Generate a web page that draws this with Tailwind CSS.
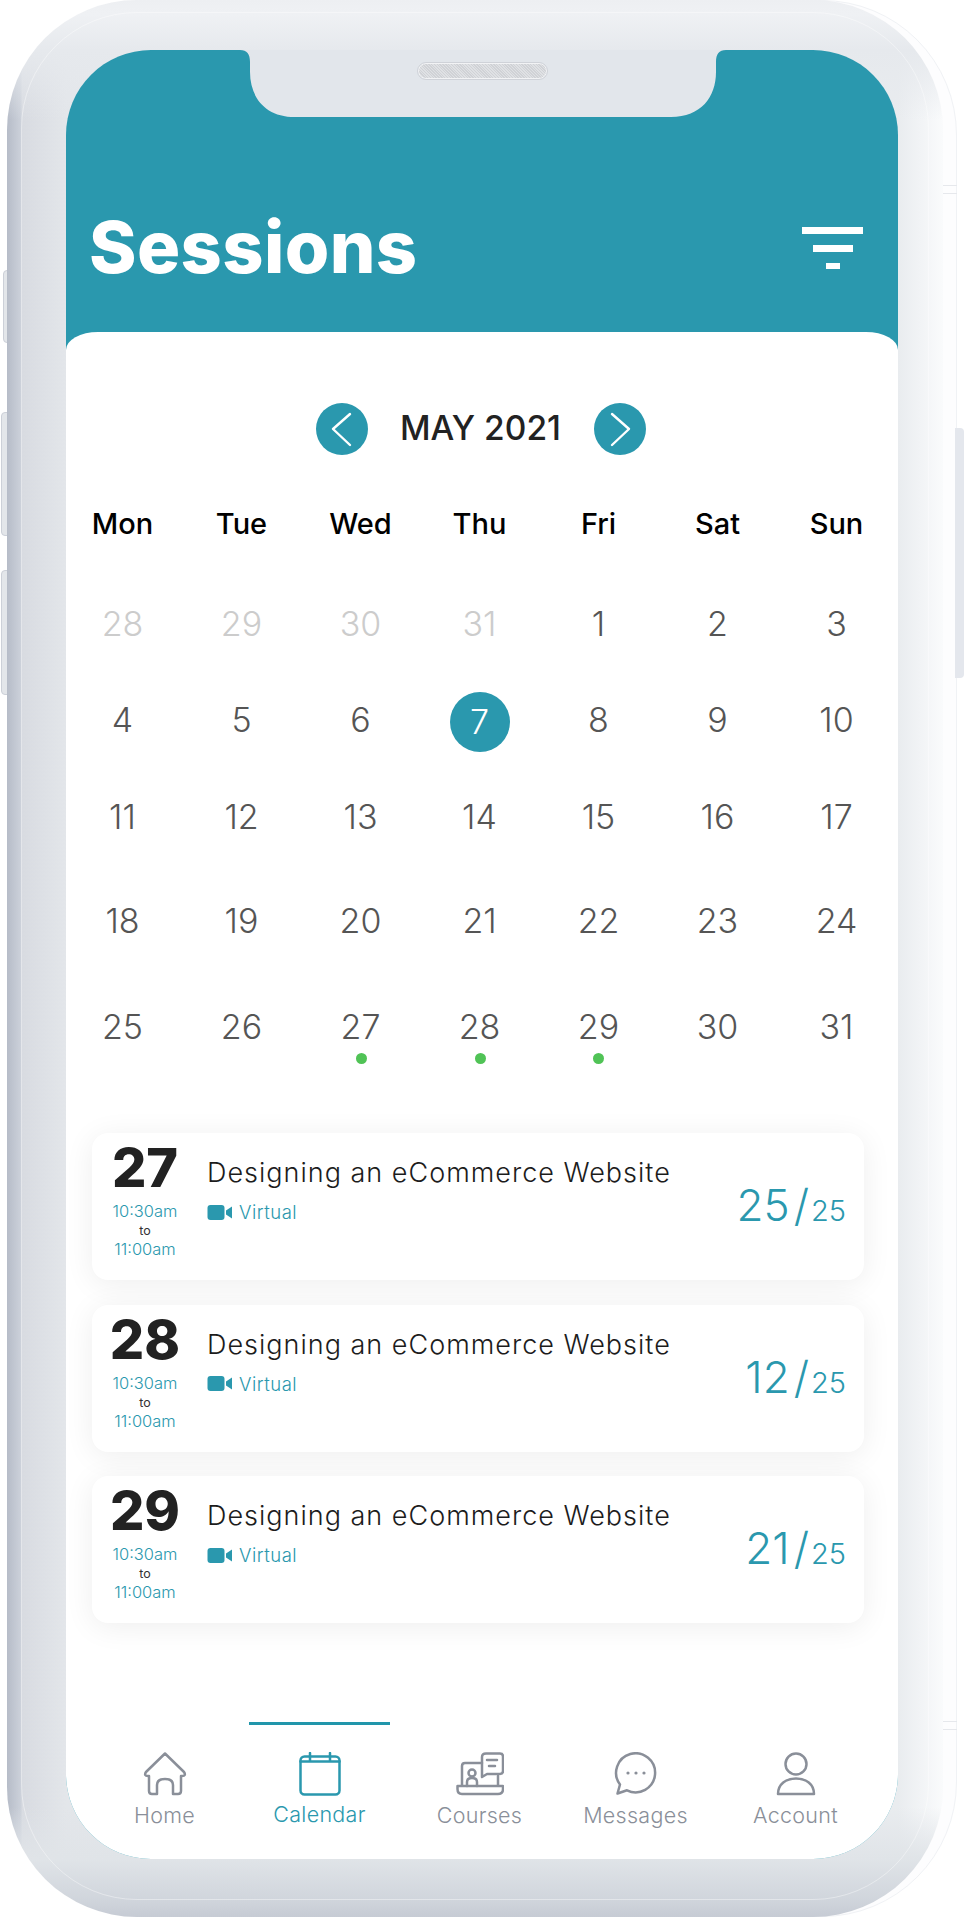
<!DOCTYPE html>
<html lang="en">
<head>
<meta charset="utf-8">
<title>Sessions</title>
<script src="https://cdn.jsdelivr.net/npm/@tailwindcss/browser@4"></script>
</head>
<body class="bg-white">
<div class="relative w-[965px] h-[1919px] overflow-hidden bg-white font-['Inter','Liberation_Sans',sans-serif]">
  <!-- side buttons -->
  <div class="absolute left-[3px] top-[270px] w-[8px] h-[73px] rounded-l-[4px] bg-[#e3e6ea] border border-[#ccd0d8]"></div>
  <div class="absolute left-[1px] top-[412px] w-[10px] h-[124px] rounded-l-[4px] bg-[#e3e6ea] border border-[#ccd0d8]"></div>
  <div class="absolute left-[1px] top-[570px] w-[10px] h-[125px] rounded-l-[4px] bg-[#e3e6ea] border border-[#ccd0d8]"></div>
  <!-- outer rim -->
  <div class="absolute left-[300px] top-0 w-[657px] h-[1917px] rounded-[135px] bg-[#fdfdfe] border border-[#f0f2f5]"></div>
  <div class="absolute left-[955px] top-[428px] w-[9px] h-[250px] rounded-r-[4px] bg-[#e4e7ed]"></div>
  <div class="absolute left-[943px] top-[185px] w-[14px] h-[9px] border-y border-[#e6e8ec]"></div>
  <div class="absolute left-[943px] top-[1721px] w-[14px] h-[9px] border-y border-[#e6e8ec]"></div>

  <!-- phone body -->
  <div class="absolute left-[7px] top-0 w-[936px] h-[1917px] rounded-[130px] pt-[50px] pl-[59px] bg-[linear-gradient(to_top,#c6cbd4_0px,#d0d5dc_17px,#e0e4e8_58px,transparent_110px),linear-gradient(to_bottom,#edeff2_0px,#eff1f4_14px,#e6e9ed_50px,transparent_120px),linear-gradient(to_right,#b6bcc8_0px,#ccd1da_14px,#d8dbe1_15px,#e3e6ea_59px,#e9ecef_50%,#e9ecef_891px,#fafbfc_100%)]">
    <div class="absolute inset-x-[14px] top-[12px] bottom-[17px] rounded-[116px] border border-white/40"></div>

    <!-- screen -->
    <div class="relative flex flex-col w-[832px] h-[1809px] rounded-[85px] overflow-hidden bg-[#2a98ae]">
      <!-- notch -->
      <svg class="absolute left-[174px] top-0" width="486" height="67" viewBox="0 0 486 67">
        <path d="M0 0C7 0 10 4 10 12V22C10 47 25 67 55 67H431C461 67 476 47 476 22V12C476 4 479 0 486 0Z" fill="#e2e6eb"/>
      </svg>
      <div class="absolute left-[352px] top-[13px] w-[129px] h-[16px] rounded-full bg-[repeating-linear-gradient(45deg,#d0d2d6_0px,#d0d2d6_1px,#dfe1e4_1px,#dfe1e4_2px)] border border-[#f2f3f5] outline outline-[#cfd2d8]"></div>

      <!-- header -->
      <div class="flex items-center justify-between h-[282px] shrink-0 pt-[111px] pl-[23px] pr-[35px]">
        <h1 class="text-[72px] leading-none font-extrabold text-white tracking-[0.4px] mt-[1px]">Sessions</h1>
        <div class="flex flex-col items-center gap-[11px] mt-[2px]">
          <div class="w-[61px] h-[7px] bg-white"></div>
          <div class="w-[40px] h-[7px] bg-white"></div>
          <div class="w-[14px] h-[6px] bg-white"></div>
        </div>
      </div>

      <!-- panel -->
      <div class="flex flex-col flex-1 bg-white rounded-tl-[32px_18px] rounded-tr-[32px_18px]">
        <div class="flex items-center justify-center h-[52px] mt-[71px] ml-[-3px]">
          <button class="w-[52px] h-[52px] rounded-full bg-[#2a98ae] flex items-center justify-center">
            <svg width="52" height="52" viewBox="0 0 52 52" fill="none"><path d="M34 11L17 26L34 42" stroke="#fff" stroke-width="2.4" stroke-linecap="round" stroke-linejoin="round"/></svg>
          </button>
          <div class="w-[226px] text-center text-[33.5px] leading-none font-medium text-[#222]">MAY 2021</div>
          <button class="w-[52px] h-[52px] rounded-full bg-[#2a98ae] flex items-center justify-center">
            <svg width="52" height="52" viewBox="0 0 52 52" fill="none"><path d="M18 11L35 26L18 42" stroke="#fff" stroke-width="2.4" stroke-linecap="round" stroke-linejoin="round"/></svg>
          </button>
        </div>

        <div class="grid grid-cols-7 w-[833px] ml-[-3px] mt-[47px] h-[40px] items-center text-center text-[29px] font-medium text-black">
          <div>Mon</div><div>Tue</div><div>Wed</div><div>Thu</div><div>Fri</div><div>Sat</div><div>Sun</div>
        </div>

        <div class="grid grid-cols-7 grid-rows-[96px_96px_98px_110px_102px] w-[833px] ml-[-3px] mt-[33px] items-center justify-items-center text-[34px] font-light text-[#555]">
          <div class="text-[#ccc]">28</div><div class="text-[#ccc]">29</div><div class="text-[#ccc]">30</div><div class="text-[#ccc]">31</div><div>1</div><div>2</div><div>3</div>
          <div>4</div><div>5</div><div>6</div>
          <div class="flex items-center justify-center w-[60px] h-[60px] mt-[5px] rounded-full bg-[#2a98ae] text-white">7</div>
          <div>8</div><div>9</div><div>10</div>
          <div>11</div><div>12</div><div>13</div><div>14</div><div>15</div><div>16</div><div>17</div>
          <div>18</div><div>19</div><div>20</div><div>21</div><div>22</div><div>23</div><div>24</div>
          <div>25</div><div>26</div>
          <div class="relative">27<span class="absolute left-1/2 top-[52px] -ml-[5px] w-[11px] h-[11px] rounded-full bg-[#50c356]"></span></div>
          <div class="relative">28<span class="absolute left-1/2 top-[52px] -ml-[5px] w-[11px] h-[11px] rounded-full bg-[#50c356]"></span></div>
          <div class="relative">29<span class="absolute left-1/2 top-[52px] -ml-[5px] w-[11px] h-[11px] rounded-full bg-[#50c356]"></span></div>
          <div>30</div><div>31</div>
        </div>

        <!-- cards -->
        <div class="flex flex-col gap-[24.5px] mt-[56px] ml-[26px] w-[772px]">
          <div class="relative flex h-[147px] rounded-[16px] bg-white shadow-[0_4px_30px_rgba(0,0,0,0.07)]">
            <div class="w-[115px] shrink-0 flex flex-col items-center pr-[9px] pt-[4px]">
              <div class="text-[54px] leading-[62px] font-extrabold text-[#222]">27</div>
              <div class="text-[16.5px] leading-[19px] mt-[3px] font-light text-[#2a98ae]">10:30am</div>
              <div class="text-[12.5px] leading-[19px] text-[#333]">to</div>
              <div class="text-[16.5px] leading-[19px] font-light text-[#2a98ae]">11:00am</div>
            </div>
            <div class="pt-[24px]">
              <div class="text-[27px] leading-[32px] font-light text-[#1c1c1c] tracking-[1px]">Designing an eCommerce Website</div>
              <div class="flex items-center gap-[7px] mt-[11px] text-[18.5px] leading-[24px] font-light text-[#2a98ae]">
                <svg width="25" height="15" viewBox="0 0 25 15"><rect x="0.5" width="17" height="15" rx="3" fill="#2a98ae"/><path d="M19 5.5L25 1.5V13.5L19 9.5Z" fill="#2a98ae"/></svg>
                <span class="tracking-[0.5px]">Virtual</span>
              </div>
            </div>
            <div class="absolute right-[18px] top-[46px] flex items-baseline font-light text-[#2a98ae] text-[44px] leading-[52px]"><span>25</span><span class="ml-[4px] mr-[2px]">/</span><span class="text-[29px]">25</span></div>
          </div>

          <div class="relative flex h-[147px] rounded-[16px] bg-white shadow-[0_4px_30px_rgba(0,0,0,0.07)]">
            <div class="w-[115px] shrink-0 flex flex-col items-center pr-[9px] pt-[4px]">
              <div class="text-[54px] leading-[62px] font-extrabold text-[#222]">28</div>
              <div class="text-[16.5px] leading-[19px] mt-[3px] font-light text-[#2a98ae]">10:30am</div>
              <div class="text-[12.5px] leading-[19px] text-[#333]">to</div>
              <div class="text-[16.5px] leading-[19px] font-light text-[#2a98ae]">11:00am</div>
            </div>
            <div class="pt-[24px]">
              <div class="text-[27px] leading-[32px] font-light text-[#1c1c1c] tracking-[1px]">Designing an eCommerce Website</div>
              <div class="flex items-center gap-[7px] mt-[11px] text-[18.5px] leading-[24px] font-light text-[#2a98ae]">
                <svg width="25" height="15" viewBox="0 0 25 15"><rect x="0.5" width="17" height="15" rx="3" fill="#2a98ae"/><path d="M19 5.5L25 1.5V13.5L19 9.5Z" fill="#2a98ae"/></svg>
                <span class="tracking-[0.5px]">Virtual</span>
              </div>
            </div>
            <div class="absolute right-[18px] top-[46px] flex items-baseline font-light text-[#2a98ae] text-[44px] leading-[52px]"><span>12</span><span class="ml-[4px] mr-[2px]">/</span><span class="text-[29px]">25</span></div>
          </div>

          <div class="relative flex h-[147px] rounded-[16px] bg-white shadow-[0_4px_30px_rgba(0,0,0,0.07)]">
            <div class="w-[115px] shrink-0 flex flex-col items-center pr-[9px] pt-[4px]">
              <div class="text-[54px] leading-[62px] font-extrabold text-[#222]">29</div>
              <div class="text-[16.5px] leading-[19px] mt-[3px] font-light text-[#2a98ae]">10:30am</div>
              <div class="text-[12.5px] leading-[19px] text-[#333]">to</div>
              <div class="text-[16.5px] leading-[19px] font-light text-[#2a98ae]">11:00am</div>
            </div>
            <div class="pt-[24px]">
              <div class="text-[27px] leading-[32px] font-light text-[#1c1c1c] tracking-[1px]">Designing an eCommerce Website</div>
              <div class="flex items-center gap-[7px] mt-[11px] text-[18.5px] leading-[24px] font-light text-[#2a98ae]">
                <svg width="25" height="15" viewBox="0 0 25 15"><rect x="0.5" width="17" height="15" rx="3" fill="#2a98ae"/><path d="M19 5.5L25 1.5V13.5L19 9.5Z" fill="#2a98ae"/></svg>
                <span class="tracking-[0.5px]">Virtual</span>
              </div>
            </div>
            <div class="absolute right-[18px] top-[46px] flex items-baseline font-light text-[#2a98ae] text-[44px] leading-[52px]"><span>21</span><span class="ml-[4px] mr-[2px]">/</span><span class="text-[29px]">25</span></div>
          </div>
        </div>

        <!-- nav -->
        <nav class="flex mt-auto h-[137px] text-[21.5px] tracking-[0.3px] font-light text-[#8a8f99]">
          <a class="flex flex-col items-center w-[141px] ml-[28px] border-t-[3px] border-transparent pt-[27px]">
            <svg width="44" height="44" viewBox="0 0 44 44" fill="none" stroke="#8a8f99" stroke-width="2.5" stroke-linejoin="round"><path d="M22 1.5L41 20Q43.5 24 39 24H38V39Q38 42 35 42H30V33Q30 27 22 27Q14 27 14 33V42H9Q6 42 6 39V24H5Q.5 24 3 20Z"/></svg>
            <span class="mt-[5px] leading-[28px]">Home</span>
          </a>
          <a class="flex flex-col items-center w-[141px] ml-[14px] border-t-[3px] border-[#2196ab] pt-[27px] text-[#2a98ae]">
            <svg width="44" height="44" viewBox="0 0 44 44" fill="none" stroke="#2a98ae" stroke-width="2.5" stroke-linecap="round"><rect x="2.5" y="4.5" width="39" height="38" rx="4"/><path d="M2.5 9.5H41.5M12 1V9M32 1V9"/></svg>
            <span class="mt-[4px] leading-[28px]">Calendar</span>
          </a>
          <a class="flex flex-col items-center w-[141px] ml-[19px] border-t-[3px] border-transparent pt-[27px]">
            <svg width="48" height="44" viewBox="0 0 48 44" fill="none" stroke="#8a8f99" stroke-width="2.5" stroke-linejoin="round" stroke-linecap="round"><path d="M26 11H9Q6 11 6 14V34M42 24V34M1.5 34H47V37Q47 42 42 42H6Q1.5 42 1.5 37Z"/><path d="M30 1.5H44Q47 1.5 47 4.5V19Q47 22 44 22H31L26 25V5Q26 1.5 30 1.5Z"/><path d="M31 8H41M33 14H39"/><circle cx="16" cy="21" r="3.5"/><path d="M11 34V30Q11 26 16 26Q21 26 21 30V34"/></svg>
            <span class="mt-[5px] leading-[28px]">Courses</span>
          </a>
          <a class="flex flex-col items-center w-[141px] ml-[15px] border-t-[3px] border-transparent pt-[27px]">
            <svg width="44" height="44" viewBox="0 0 44 44" fill="none" stroke="#8a8f99" stroke-width="2.5" stroke-linejoin="round"><path d="M6 32.5A19.5 19.5 0 1 1 13 38.3L3.5 41.5Z"/><circle cx="14" cy="21" r="1.6" fill="#8a8f99" stroke="none"/><circle cx="22" cy="21" r="1.6" fill="#8a8f99" stroke="none"/><circle cx="30" cy="21" r="1.6" fill="#8a8f99" stroke="none"/></svg>
            <span class="mt-[5px] leading-[28px]">Messages</span>
          </a>
          <a class="flex flex-col items-center w-[141px] ml-[19px] border-t-[3px] border-transparent pt-[27px]">
            <svg width="44" height="44" viewBox="0 0 44 44" fill="none" stroke="#8a8f99" stroke-width="2.5" stroke-linejoin="round"><circle cx="22" cy="12" r="10.5"/><path d="M4 42C4 32 12 26.5 22 26.5C32 26.5 40 32 40 42Z"/></svg>
            <span class="mt-[5px] leading-[28px]">Account</span>
          </a>
        </nav>
      </div>
    </div>
  </div>
</div>
</body>
</html>
